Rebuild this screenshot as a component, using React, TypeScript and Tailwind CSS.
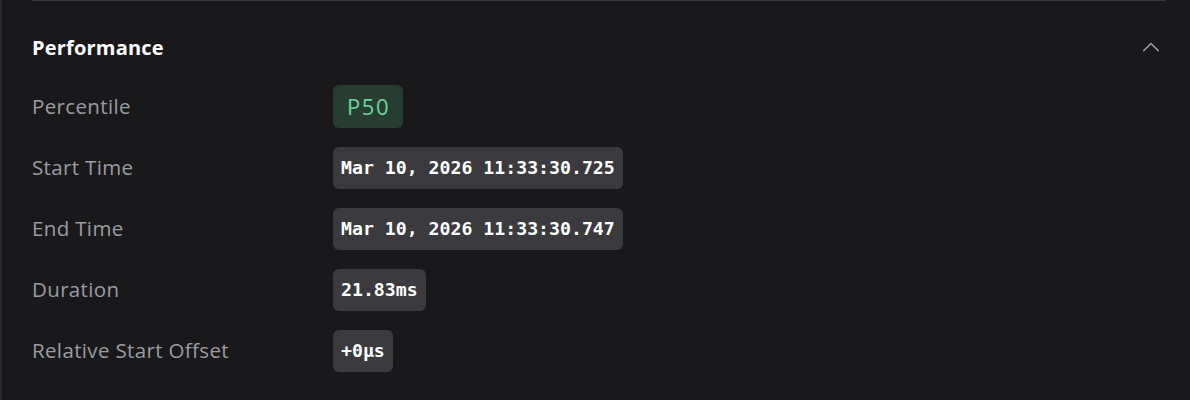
import React from "react";

const rows: { label: string; value: string; kind: "pct" | "mono" }[] = [
  { label: "Percentile", value: "P50", kind: "pct" },
  { label: "Start Time", value: "Mar 10, 2026 11:33:30.725", kind: "mono" },
  { label: "End Time", value: "Mar 10, 2026 11:33:30.747", kind: "mono" },
  { label: "Duration", value: "21.83ms", kind: "mono" },
  { label: "Relative Start Offset", value: "+0µs", kind: "mono" },
];

export default function App() {
  return (
    <div
      className="w-[1190px] h-[400px] bg-[#19191c] border-l-2 border-[#2a2a2e] overflow-hidden"
      style={{ fontFamily: "'Open Sans', 'Noto Sans', sans-serif" }}
    >
      <div className="ml-[30px] mr-[24px] h-px bg-[#3a3a3e]" />
      <div className="pl-[30px] pr-[28px]">
        <div className="flex items-center justify-between h-[95px] pb-[1px]">
          <div className="text-[20px] font-bold text-white tracking-[0.2px]">Performance</div>
          <svg width="22" height="22" viewBox="0 0 24 24" fill="none" stroke="#a3a3a8" strokeWidth="1.6" strokeLinecap="round" strokeLinejoin="round">
            <path d="M4 15l8-8 8 8" />
          </svg>
        </div>
        <div className="flex flex-col gap-[18px] -mt-[11px]">
          {rows.map((r) => (
            <div key={r.label} className="flex items-center h-[43px]">
              <div className="w-[301px] text-[20.5px] text-[#9b9ba1] tracking-[0.35px]">{r.label}</div>
              {r.kind === "pct" ? (
                <div className="h-[43px] pl-[14px] pr-[13px] flex items-center rounded-[6px] bg-[#283d31] text-[#6dd59c] text-[22px] tracking-[1.6px]">
                  {r.value}
                </div>
              ) : (
                <div
                  className="h-[42px] px-[8px] flex items-center rounded-[6px] bg-[#3b3b3f] text-white text-[18.2px] font-bold"
                  style={{ fontFamily: "'DejaVu Sans Mono', monospace" }}
                >
                  {r.value}
                </div>
              )}
            </div>
          ))}
        </div>
      </div>
    </div>
  );
}
